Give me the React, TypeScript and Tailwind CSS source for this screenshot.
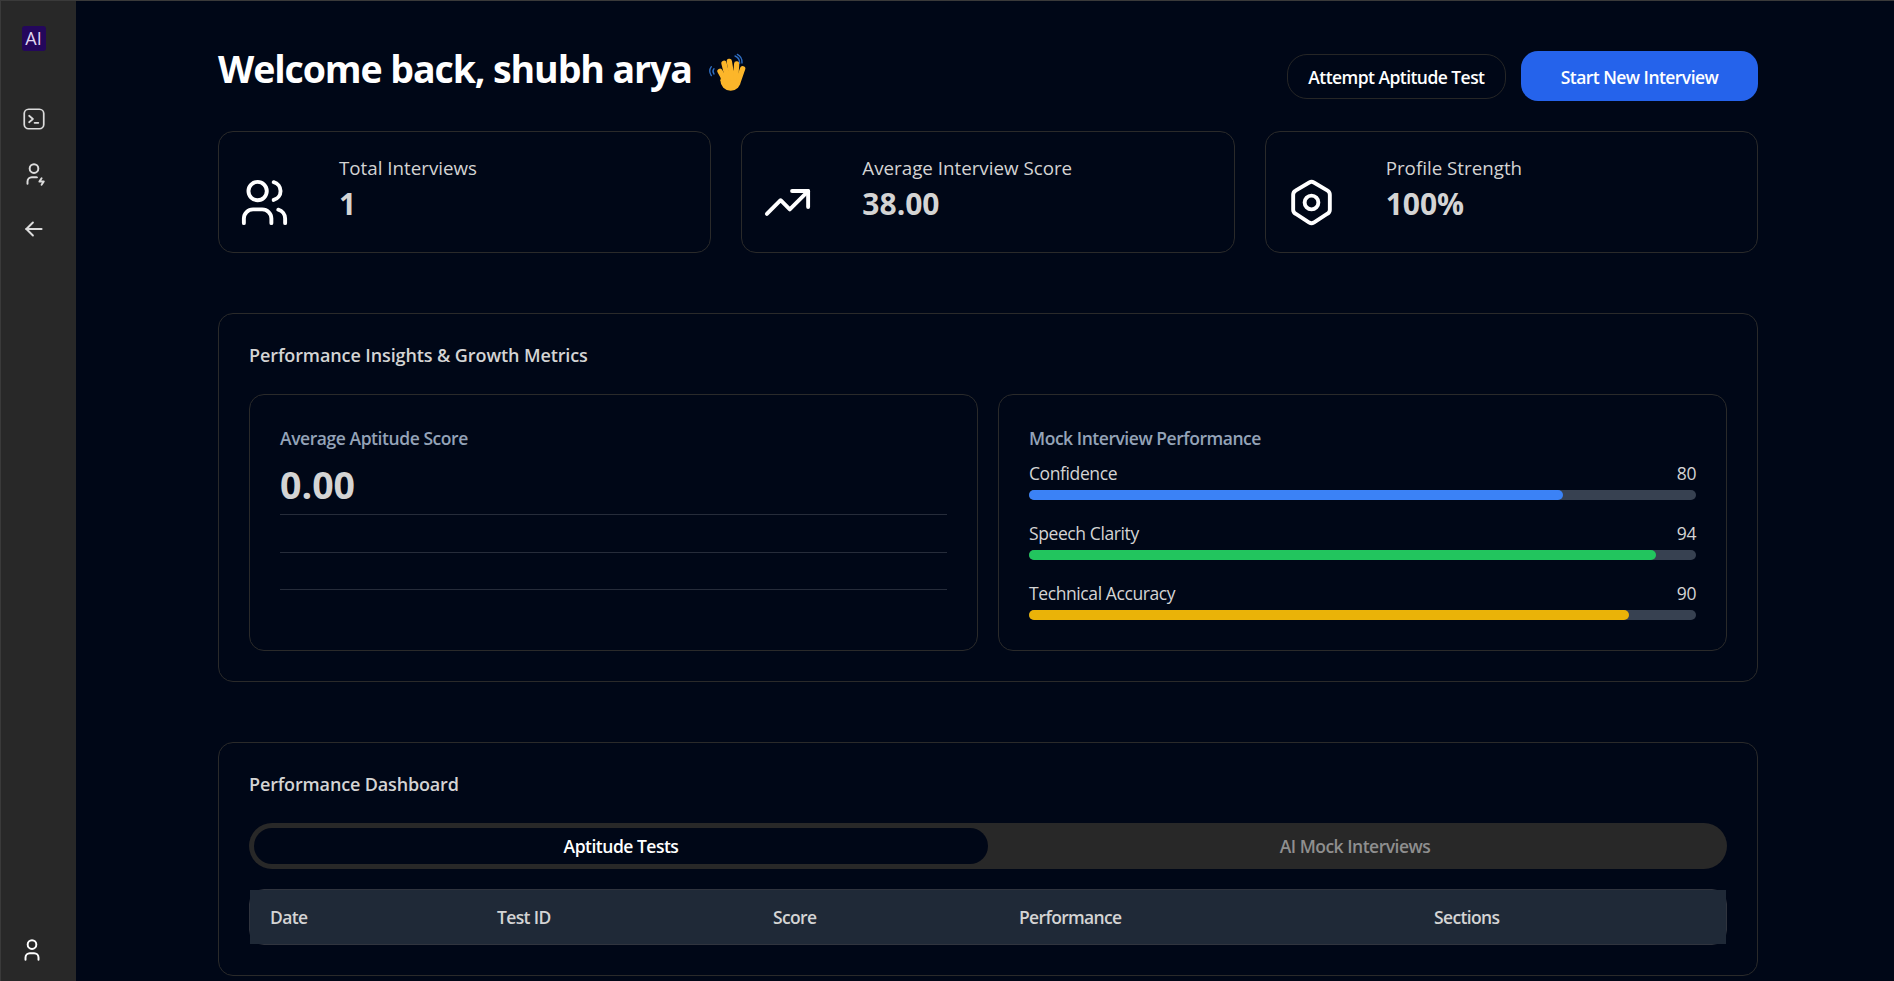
import { TbArrowLeft, TbNut, TbTrendingUp, TbUser, TbUserBolt, TbUsers } from "react-icons/tb";

const stats = [
  { label: "Total Interviews", value: "1", Icon: TbUsers },
  { label: "Average Interview Score", value: "38.00", Icon: TbTrendingUp },
  { label: "Profile Strength", value: "100%", Icon: TbNut },
];

const metrics = [
  { label: "Confidence", value: 80, bar: "bg-[#3b82f6]" },
  { label: "Speech Clarity", value: 94, bar: "bg-[#22c55e]" },
  { label: "Technical Accuracy", value: 90, bar: "bg-[#eab308]" },
];

const columns = [
  { label: "Date", width: "w-[227px]" },
  { label: "Test ID", width: "w-[276px]" },
  { label: "Score", width: "w-[246px]" },
  { label: "Performance", width: "w-[415px]" },
  { label: "Sections", width: "flex-1" },
];

function WaveHand() {
  return (
    <svg viewBox="0 0 180 150" className="h-[50px] w-[60px]" fill="none" strokeLinecap="round">
      <ellipse cx="104" cy="103" rx="31" ry="31" fill="#fcb62a" />
      <g stroke="#fcb62a" strokeWidth="16">
        <path d="M88 105 72 76" />
        <path d="M96 100 84 52" />
        <path d="M108 95 100 46" />
        <path d="M119 95 122 54" />
        <path d="M128 102 140 68" />
      </g>
      <g stroke="#2f6fc4" strokeWidth="4">
        <path d="M46 62c-6 8-6 18 0 27" />
        <path d="M54 68c-4 5-4 11 0 16" />
        <path d="M117 30c9 3 14 11 14 22" />
        <path d="M124 25c10 5 15 14 14 26" />
      </g>
    </svg>
  );
}

function TerminalIcon() {
  return (
    <svg viewBox="0 0 24 24" className="h-[26px] w-[26px]" fill="none" stroke="currentColor" strokeWidth="1.6" strokeLinecap="round" strokeLinejoin="round">
      <rect x="3" y="3" width="18" height="18" rx="4" />
      <path d="M7.500 9 11 12l-3.500 3" />
      <path d="M12.500 15.500h3.500" />
    </svg>
  );
}

export default function App() {
  return (
    <div className="flex h-[981px] overflow-hidden border-t border-t-[#3a3a3a] bg-[#000717] font-['Open_Sans',sans-serif]">
      <aside className="flex w-[76px] shrink-0 flex-col items-center border-l border-l-[#3a3a3a] bg-[#282828] pt-[25px] pr-[10px] pb-[18px]">
        <div className="flex h-[25px] w-[24px] items-center justify-center rounded-[3px] bg-[#24075c] text-[18px] text-[#e0d8f0]">
          AI
        </div>
        <div className="mt-[55px] flex flex-col items-center gap-[29px] text-[#dcdcdc]">
          <TerminalIcon />
          <TbUserBolt className="h-[26px] w-[26px]" strokeWidth={1.8} />
          <TbArrowLeft className="h-[26px] w-[26px]" strokeWidth={1.8} />
        </div>
        <TbUser className="mt-auto mr-[4px] h-[26px] w-[26px] text-white" strokeWidth={1.8} />
      </aside>

      <main className="ml-[142px] w-[1540px] shrink-0">
        <header className="flex h-[130px] items-start justify-between pt-[45px]">
          <h1 className="flex h-[50px] items-center text-[37.500px] font-bold tracking-[-1.100px] text-white">
            <span className="-mt-[4px]">Welcome back, shubh arya</span>
            <span className="ml-[4px]"><WaveHand /></span>
          </h1>
          <div className="mt-[5px] flex items-start gap-[15px]">
            <button className="mt-[3px] h-[45px] rounded-[20px] border border-[#262626] px-[20.500px] pt-[1px] text-[17.500px] font-semibold tracking-[-0.550px] text-white">
              Attempt Aptitude Test
            </button>
            <button className="h-[50px] w-[237px] rounded-[17px] bg-[#2563eb] pt-[2px] text-[17.500px] font-semibold tracking-[-0.550px] text-white">
              Start New Interview
            </button>
          </div>
        </header>

        <section className="grid grid-cols-3 gap-[30px]">
          {stats.map(({ label, value, Icon }) => (
            <div key={label} className="flex h-[122px] items-center rounded-[15px] border border-[#2a2a2a] pl-[18px]">
              <Icon className="mt-[20px] h-[55px] w-[55px] text-white" strokeWidth={1.7} />
              <div className="-mt-[9px] ml-[47px]">
                <div className="text-[18.750px] leading-[28px] text-[#d4d4d4]">{label}</div>
                <div className="mt-[4px] text-[30px] leading-[36px] font-bold text-[#d4d4d4]">{value}</div>
              </div>
            </div>
          ))}
        </section>

        <section className="mt-[60px] h-[369px] rounded-[15px] border border-[#2a2a2a] p-[30px]">
          <h2 className="text-[18px] leading-[22px] font-semibold tracking-[-0.100px] text-[#d4d4d4]">Performance Insights &amp; Growth Metrics</h2>
          <div className="mt-[28px] grid grid-cols-2 gap-[20px]">
            <div className="h-[257px] rounded-[15px] border border-[#2a2a2a] p-[30px]">
              <div className="mt-[1px] text-[17.500px] leading-[24px] font-semibold tracking-[-0.440px] text-[#94a3b8]">Average Aptitude Score</div>
              <div className="mt-[11px] text-[37.500px] leading-[48px] font-bold text-[#d4d4d4]">0.00</div>
              <div className="mt-[5px] h-[114px] border-t border-[#262c3a]">
                <div className="mt-[36.500px] border-t border-[#262c3a]" />
                <div className="mt-[36.500px] border-t border-[#262c3a]" />
              </div>
            </div>
            <div className="h-[257px] rounded-[15px] border border-[#2a2a2a] p-[30px]">
              <div className="mt-[1px] text-[17.500px] leading-[24px] font-semibold tracking-[-0.460px] text-[#94a3b8]">Mock Interview Performance</div>
              <div className="mt-[11px] flex flex-col gap-[21px]">
                {metrics.map((m) => (
                  <div key={m.label}>
                    <div className="flex justify-between text-[17.500px] leading-[25px] tracking-[-0.400px] text-[#d4d4d4]">
                      <span>{m.label}</span>
                      <span>{m.value}</span>
                    </div>
                    <div className="mt-[4px] h-[10px] rounded-full bg-[#374151]">
                      <div className={`h-full rounded-full ${m.bar}`} style={{ width: `${m.value}%` }} />
                    </div>
                  </div>
                ))}
              </div>
            </div>
          </div>
        </section>

        <section className="mt-[60px] h-[234px] rounded-[15px] border border-[#2a2a2a] p-[30px]">
          <h2 className="text-[18px] leading-[22px] font-semibold tracking-[-0.150px] text-[#d4d4d4]">Performance Dashboard</h2>
          <div className="mt-[28px] grid h-[46px] grid-cols-2 rounded-[23px] bg-[#282828] p-[5px] text-[17.500px] font-semibold tracking-[-0.500px]">
            <div className="flex items-center justify-center rounded-[18px] bg-[#000717] text-white">Aptitude Tests</div>
            <div className="flex items-center justify-center text-[#8f8f8f]">AI Mock Interviews</div>
          </div>
          <div className="mt-[20px] h-[56px] rounded-[15px] border border-[#30343e]">
            <div className="flex h-full items-center bg-[#1f2937] pl-[20px] text-[17.500px] font-semibold tracking-[-0.650px] text-[#d4d4d4]">
              {columns.map((c) => (
                <div key={c.label} className={c.width}>{c.label}</div>
              ))}
            </div>
          </div>
        </section>
      </main>
    </div>
  );
}
